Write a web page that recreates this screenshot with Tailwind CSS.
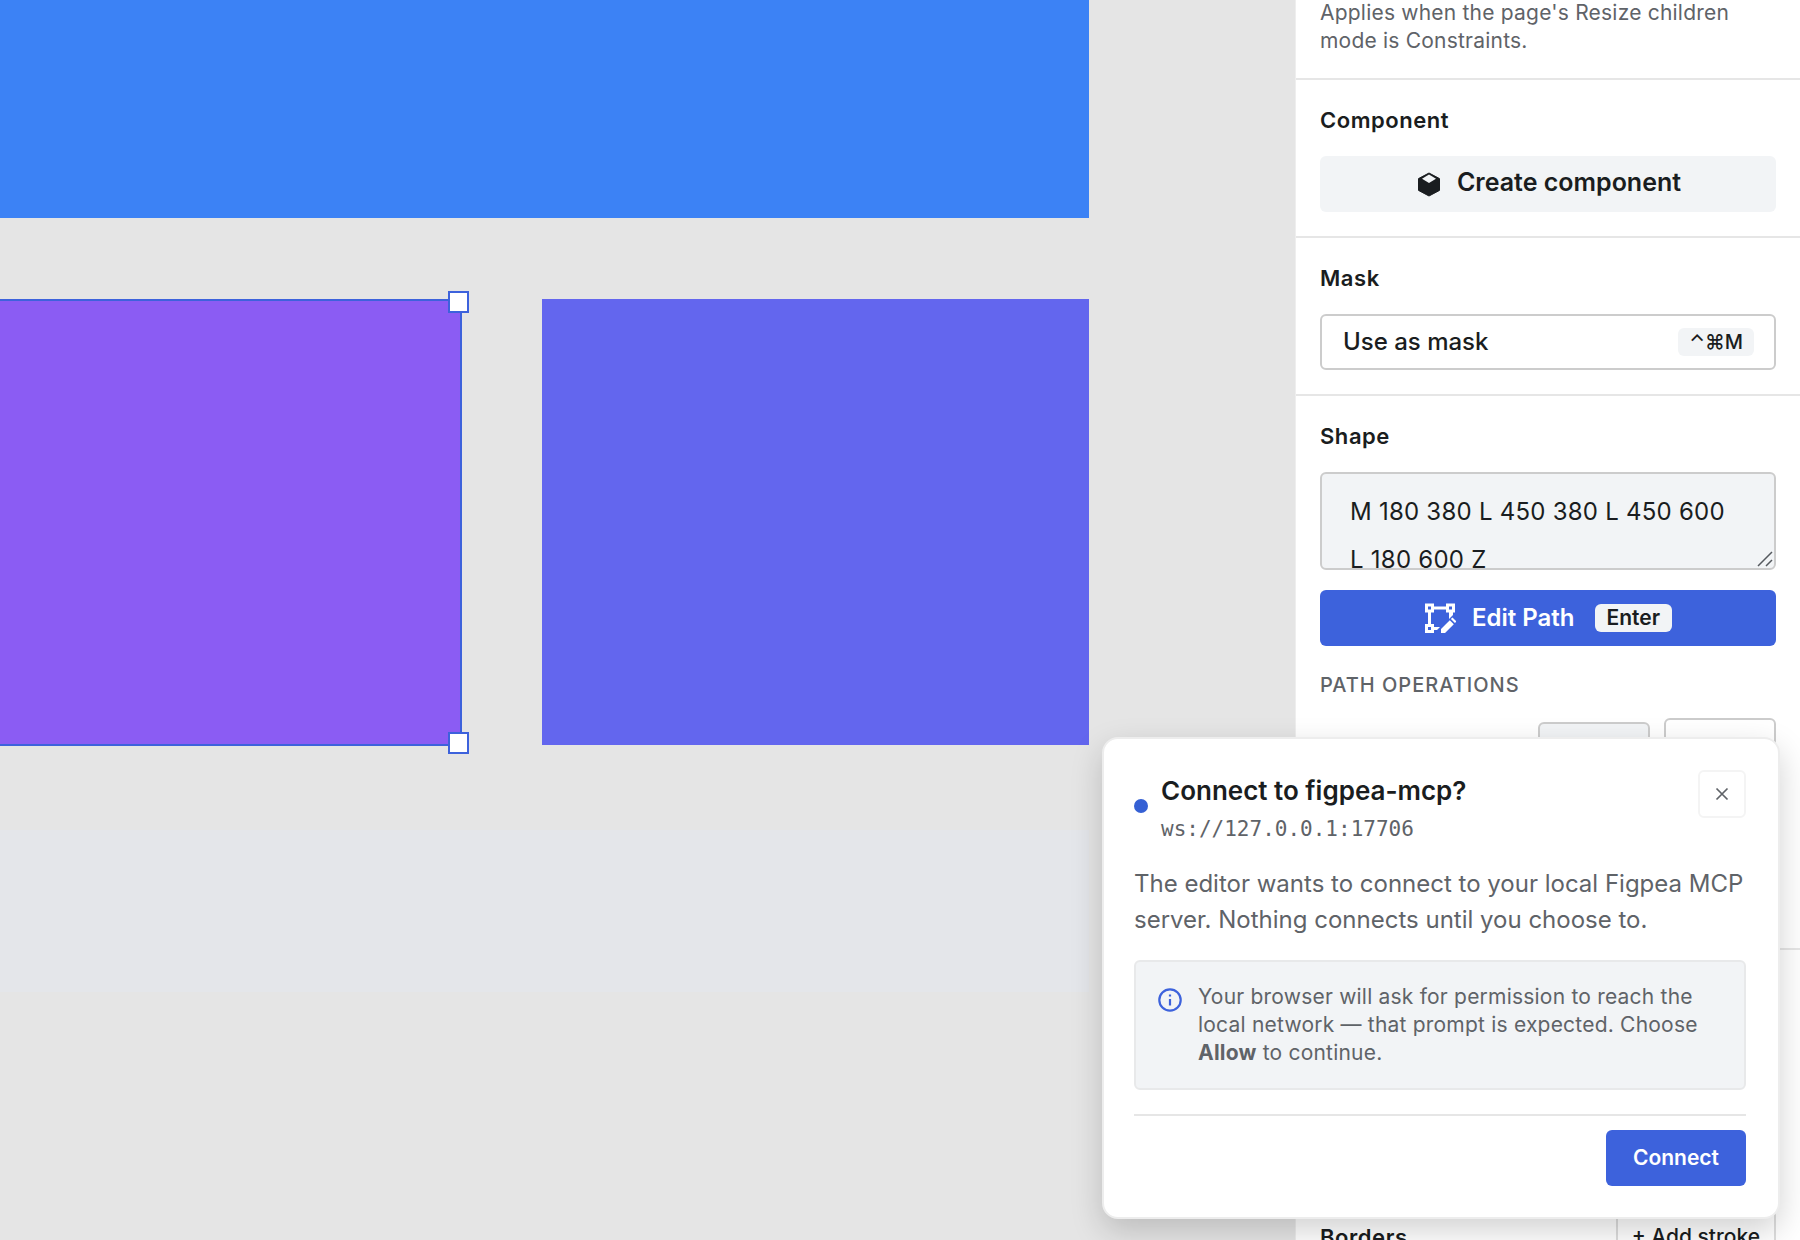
<!DOCTYPE html>
<html lang="en">
<head>
<meta charset="utf-8">
<meta name="viewport" content="width=device-width, initial-scale=1">
<title>Figpea editor</title>
<script src="https://cdn.jsdelivr.net/npm/@tailwindcss/browser@4"></script>
</head>
<body class="relative flex h-screen overflow-hidden bg-[#e5e5e5] font-['Inter',sans-serif] text-[#1a1d20]">

<!-- Canvas -->
<main class="relative min-w-0 flex-1 overflow-hidden" aria-label="Canvas">
  <div class="absolute top-0 left-0 h-[218px] w-[1089px] bg-[#3c82f5]"></div>
  <div class="absolute top-[299px] left-0 h-[447px] w-[462px] border-y-2 border-r-2 border-[#3d62dc] bg-[#8b5cf3]"></div>
  <div class="absolute top-[291px] left-[448px] h-[22px] w-[21px] border-2 border-[#3d62dc] bg-white"></div>
  <div class="absolute top-[732px] left-[448px] h-[22px] w-[21px] border-2 border-[#3d62dc] bg-white"></div>
  <div class="absolute top-[299px] left-[542px] h-[446px] w-[547px] bg-[#6366ee]"></div>
  <div class="absolute top-[830px] left-0 h-[162px] w-[1089px] bg-[#e4e6ea]"></div>
</main>

<!-- Properties panel -->
<aside class="flex h-full w-[505px] shrink-0 flex-col overflow-hidden border-l border-[#eeeeee] bg-white">
  <section class="flex h-20 shrink-0 flex-col justify-end border-b-2 border-[#e6e6e6] px-6 pb-[23px]">
    <p class="text-[21px] leading-7 tracking-[0.01em] text-[#5f6368]">Applies when the page's Resize children mode is Constraints.</p>
  </section>

  <section class="flex shrink-0 flex-col gap-[22px] border-b-2 border-[#e6e6e6] px-6 pt-[26px] pb-6">
    <h2 class="text-[22px] leading-7 font-semibold tracking-wide">Component</h2>
    <button type="button" class="flex h-14 w-full items-center justify-center gap-[14px] rounded-md bg-[#f2f4f6] text-[25px] leading-8 font-semibold">
      <svg class="size-7" viewBox="0 0 28 28" aria-hidden="true"><path fill="#1a1d20" stroke="#1a1d20" stroke-linejoin="round" d="M14 3 24.500 8.600v11.800L14 26 3.500 20.400V8.600z"/><path fill="#f2f4f6" d="M14 4.600 21 8.800 14 13 7 8.800z"/></svg>
      <span class="pb-1">Create component</span>
    </button>
  </section>

  <section class="flex shrink-0 flex-col gap-[22px] border-b-2 border-[#e6e6e6] px-6 pt-[26px] pb-6">
    <h2 class="text-[22px] leading-7 font-semibold tracking-wide">Mask</h2>
    <button type="button" class="flex h-14 w-full items-center justify-between rounded-md border-2 border-[#cccccc] pr-5 pl-[21px] text-2xl font-medium">
      Use as mask
      <kbd class="flex h-7 items-center rounded-md bg-[#f2f4f6] px-[11px] font-['Inter','DejaVu_Sans',sans-serif] text-xl font-medium">⌃⌘M</kbd>
    </button>
  </section>

  <section class="flex shrink-0 flex-col border-b-2 border-[#e6e6e6] px-6 pt-[26px] pb-6">
    <h2 class="mb-[22px] text-[22px] leading-7 font-semibold tracking-wide"><label for="path">Shape</label></h2>
    <div class="relative mb-5">
      <textarea id="path" class="block h-[98px] w-full resize-none overflow-hidden rounded-md border-2 border-[#cccccc] bg-[#f2f4f6] py-[14px] pr-8 pl-7 text-2xl leading-[48px] tracking-[0.01em]">M 180 380 L 450 380 L 450 600 L 180 600 Z</textarea>
      <svg class="pointer-events-none absolute right-[3px] bottom-[3px] size-4" viewBox="0 0 16 16" fill="none" stroke="#55595e" stroke-width="1.500" aria-hidden="true"><path d="M1 15 15 1M9 15l6-6"/></svg>
    </div>
    <button type="button" class="flex h-14 w-full items-center justify-center gap-4 rounded-md bg-[#3d62dc] text-2xl font-semibold text-white">
      <svg class="size-8" viewBox="0 0 32 32" fill="none" stroke="#fff" stroke-width="3" aria-hidden="true"><path d="M2.500 3h6v6h-6zM23.500 3h6v6h-6zM2.500 23.500h6v6h-6zM9 6h14M5.500 9v14"/><path fill="#fff" stroke="none" d="M25 10h4v3l-4 4zM10 25h6l-3 3h-3zM17 31v-4l8.800-8.800 4 4L21 31zM26.900 17.100l1.600-1.600 4 4-1.600 1.600z"/></svg>
      Edit Path
      <kbd class="ml-1 flex h-7 items-center rounded-md bg-[#f2f4f6] px-3 font-['Inter',sans-serif] text-[21px] font-semibold text-[#1a1d20]">Enter</kbd>
    </button>
    <h3 class="mt-[25px] text-xl leading-7 font-medium tracking-wider text-[#5f6368]">PATH OPERATIONS</h3>
    <div class="mt-[19px] flex h-[206px] items-start justify-end gap-[14px]">
      <button type="button" class="mt-1 h-12 w-28 rounded-md border-2 border-[#cccccc] bg-[#f2f4f6]" aria-label="Operation"></button>
      <button type="button" class="h-14 w-28 rounded-md border-2 border-[#cccccc] bg-white" aria-label="Apply"></button>
    </div>
  </section>

  <section class="flex h-[315px] shrink-0 items-end justify-between px-6">
    <h2 class="text-[22px] leading-14 font-semibold tracking-wide">Borders</h2>
    <button type="button" class="h-14 rounded-md border-2 border-[#dddddd] px-[14px] text-[21px] font-medium">+ Add stroke</button>
  </section>
</aside>

<!-- Connection prompt -->
<div role="dialog" aria-labelledby="prompt-title" class="absolute right-5 bottom-[21px] w-[678px] rounded-2xl border-2 border-[#ededed] bg-white pt-[31px] pr-8 pb-[31px] pl-[30px] shadow-[0_12px_32px_rgba(0,0,0,0.18)]">
  <div class="flex items-start justify-between">
    <div class="flex items-center gap-[13px]">
      <span class="mb-1 size-[14px] rounded-full bg-[#3560d4]"></span>
      <div>
        <h2 id="prompt-title" class="text-[26px] leading-[42px] font-semibold">Connect to figpea-mcp?</h2>
        <p class="font-['DejaVu_Sans_Mono',monospace] text-[21px] leading-[34px] text-[#5f6368]">ws://127.0.0.1:17706</p>
      </div>
    </div>
    <button type="button" aria-label="Close" class="flex size-12 items-center justify-center rounded-md border-2 border-[#f4f4f4]">
      <svg class="size-4" viewBox="0 0 16 16" fill="none" stroke="#5f6368" stroke-width="1.700" aria-hidden="true"><path d="m2.500 2.500 11 11M13.500 2.500l-11 11"/></svg>
    </button>
  </div>
  <p class="mt-5 text-2xl leading-9 text-[#5f6368]">The editor wants to connect to your local Figpea MCP server. Nothing connects until you choose to.</p>
  <div class="mt-[22px] flex gap-4 rounded-md border-2 border-[#e8e9ea] bg-[#f2f4f6] px-[22px] py-[21px]">
    <svg class="mt-[5px] size-6 shrink-0" viewBox="0 0 24 24" fill="none" stroke="#3d62dc" stroke-width="2.200" aria-hidden="true"><circle cx="12" cy="12" r="10.700"/><path d="M12 11v6.500M12 6.500v2"/></svg>
    <p class="text-[21px] leading-7 tracking-[0.01em] text-[#5f6368]">Your browser will ask for permission to reach the local network — that prompt is expected. Choose <strong class="font-bold">Allow</strong> to continue.</p>
  </div>
  <div class="mt-6 flex justify-end border-t-2 border-[#e6e6e6] pt-[14px]">
    <button type="button" class="h-14 w-[140px] rounded-md bg-[#3d62dc] text-[21px] font-semibold text-white">Connect</button>
  </div>
</div>
</body>
</html>
